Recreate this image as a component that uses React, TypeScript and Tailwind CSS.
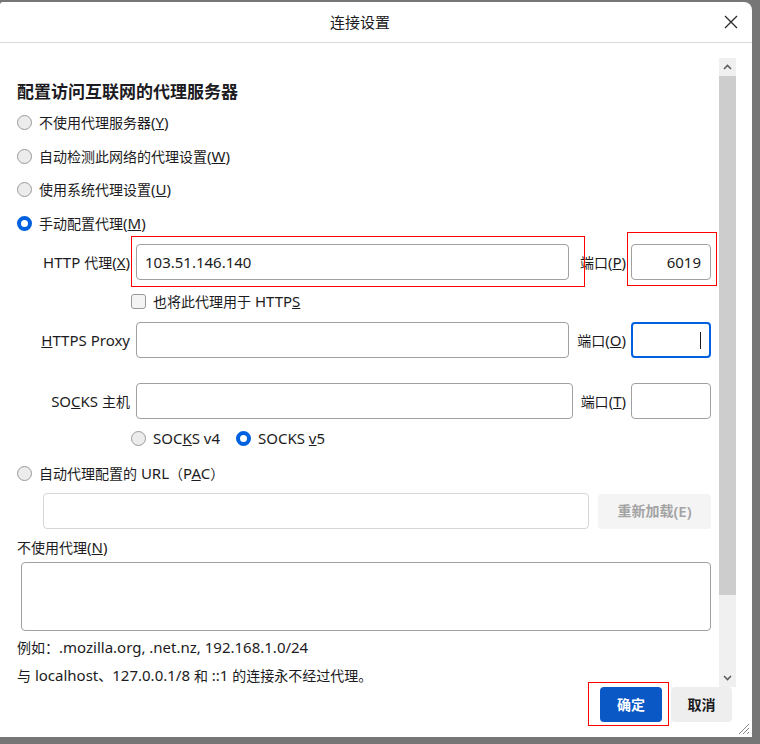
import type { ReactNode } from "react";

// Firefox "连接设置" proxy dialog

// Latin runs are set a touch larger than the CJK text around them
function En({ children }: { children: ReactNode }) {
  return <span className="text-[15px]">{children}</span>;
}

// access-key hint such as "(Y)"
function Key({ k }: { k: string }) {
  return (
    <span className="text-[15px]">
      (<u>{k}</u>)
    </span>
  );
}

function Radio({ checked = false }: { checked?: boolean }) {
  return checked ? (
    <span className="w-[15px] h-[15px] rounded-full border-[4px] border-[#0061e0] bg-white shrink-0" />
  ) : (
    <span className="w-[15px] h-[15px] rounded-full border border-[#9a9a9a] bg-[#ececec] shrink-0" />
  );
}

function RadioRow({
  checked,
  children,
  className = "",
}: {
  checked?: boolean;
  children: ReactNode;
  className?: string;
}) {
  return (
    <div className={"flex items-center h-[24px] gap-[7px] " + className}>
      <Radio checked={checked} />
      <span>{children}</span>
    </div>
  );
}

function Field({
  className = "",
  children,
}: {
  className?: string;
  children?: ReactNode;
}) {
  return (
    <div
      className={
        "relative h-[36px] rounded-[4px] border border-[#a0a0a0] bg-white flex items-center " +
        className
      }
    >
      {children}
    </div>
  );
}

function Chevron({ up }: { up?: boolean }) {
  return (
    <svg width="9" height="6" viewBox="0 0 9 6">
      <path
        d={up ? "M1 5 L4.5 1.5 L8 5" : "M1 1 L4.5 4.5 L8 1"}
        fill="none"
        stroke="#5f5f5f"
        strokeWidth="1.6"
      />
    </svg>
  );
}

export default function App() {
  return (
    <div className="w-[760px] h-[744px] bg-[#767676] pt-[2px] overflow-hidden font-['Noto_Sans','Noto_Sans_CJK_SC',sans-serif] text-[14px] text-[#1c1b22]">
      <div className="relative w-[752px] h-[735px] bg-white rounded-tr-[8px] rounded-tl-[3px] flex flex-col">
        {/* title bar */}
        <div className="h-[41px] flex items-center border-b border-[#d9d9d9] shrink-0">
          <div className="flex-1 text-center text-[15px] leading-[20px]">
            连接设置
          </div>
          <div className="w-[22px] mr-[10px] flex justify-center">
            <svg width="14" height="14" viewBox="0 0 14 14">
              <path
                d="M1 1 L13 13 M13 1 L1 13"
                stroke="#2b2b2b"
                strokeWidth="1.3"
              />
            </svg>
          </div>
        </div>

        {/* scrolling body */}
        <div className="h-[644px] flex shrink-0 overflow-hidden">
          <div className="flex-1 pl-[17px] pt-[37px] flex flex-col leading-[24px]">
            <div className="h-[24px] text-[17px] font-bold">
              配置访问互联网的代理服务器
            </div>
            <RadioRow className="mt-[6px]">
              不使用代理服务器<Key k="Y" />
            </RadioRow>
            <RadioRow className="mt-[10px]">
              自动检测此网络的代理设置<Key k="W" />
            </RadioRow>
            <RadioRow className="mt-[9px]">
              使用系统代理设置<Key k="U" />
            </RadioRow>
            <RadioRow checked className="mt-[10px]">
              手动配置代理<Key k="M" />
            </RadioRow>

            {/* HTTP */}
            <div className="mt-[9px] flex items-center">
              <div className="w-[114px] text-right pr-[1px] whitespace-nowrap">
                <En>HTTP </En>代理<Key k="X" />
              </div>
              <Field className="ml-[5px] w-[433px] pl-[8px] text-[15px]">
                103.51.146.140
                <div className="absolute left-[-6px] top-[-9px] right-[-17px] bottom-[-8px] border border-[#ff0000] pointer-events-none" />
              </Field>
              <div className="w-[57px] text-right whitespace-nowrap">
                端口<Key k="P" />
              </div>
              <Field className="ml-[5px] w-[80px] justify-end pr-[9px] text-[15px]">
                6019
                <div className="absolute left-[-5px] top-[-13px] right-[-7px] bottom-[-7px] border border-[#ff0000] pointer-events-none" />
              </Field>
            </div>

            <div className="mt-[9px] h-[24px] flex items-center ml-[114px] gap-[7px]">
              <span className="w-[15px] h-[15px] rounded-[3px] border border-[#9a9a9a] bg-[#f4f4f4]" />
              <span>
                也将此代理用于
                <En>
                  {" "}
                  HTTP<u>S</u>
                </En>
              </span>
            </div>

            {/* HTTPS */}
            <div className="mt-[9px] flex items-center">
              <div className="w-[114px] text-right pr-[1px] whitespace-nowrap">
                <En>
                  <u>H</u>TTPS Proxy
                </En>
              </div>
              <Field className="ml-[5px] w-[433px]" />
              <div className="w-[57px] text-right whitespace-nowrap">
                端口<Key k="O" />
              </div>
              <div className="ml-[5px] w-[80px] h-[36px] rounded-[4px] border-2 border-[#0061e0] flex items-center justify-end pr-[8px]">
                <span className="w-[1px] h-[17px] bg-[#1c1b22]" />
              </div>
            </div>

            {/* SOCKS */}
            <div className="mt-[25px] flex items-center">
              <div className="w-[114px] text-right pr-[1px] whitespace-nowrap">
                <En>
                  SO<u>C</u>KS{" "}
                </En>
                主机
              </div>
              <Field className="ml-[5px] w-[437px]" />
              <div className="w-[53px] text-right whitespace-nowrap">
                端口<Key k="T" />
              </div>
              <Field className="ml-[5px] w-[80px]" />
            </div>

            <div className="mt-[7px] h-[24px] flex items-center ml-[114px]">
              <div className="w-[105px] flex items-center gap-[7px]">
                <Radio />
                <En>
                  SOC<u>K</u>S v4
                </En>
              </div>
              <div className="flex items-center gap-[7px]">
                <Radio checked />
                <En>
                  SOCKS <u>v</u>5
                </En>
              </div>
            </div>

            <RadioRow className="mt-[11px]">
              自动代理配置的<En> URL</En>（<En>P<u>A</u>C</En>）
            </RadioRow>

            <div className="mt-[8px] flex items-center">
              <div className="ml-[26px] w-[546px] h-[36px] rounded-[4px] border border-[#d6d6d6]" />
              <div className="ml-[9px] w-[113px] h-[35px] rounded-[4px] bg-[#f4f4f4] flex items-center justify-center font-semibold text-[#a3a3a3]">
                重新加载<En>(E)</En>
              </div>
            </div>

            <div className="mt-[6px] h-[24px]">
              不使用代理<Key k="N" />
            </div>
            <div className="mt-[3px] ml-[4px] w-[690px] h-[72px] rounded-[4px] border border-[#a0a0a0]" />
            <div className="mt-[4px] h-[24px] whitespace-nowrap">
              例如：<En>.mozilla.org, .net.nz, 192.168.1.0/24</En>
            </div>
            <div className="mt-[4px] h-[24px] whitespace-nowrap">
              与<En> localhost</En>、<En>127.0.0.1/8 </En>和<En> ::1 </En>
              的连接永不经过代理。
            </div>
          </div>

          {/* scrollbar */}
          <div className="w-[17px] mr-[16px] mt-[15px] flex flex-col">
            <div className="h-[18px] bg-[#f0f0f0] flex items-center justify-center">
              <Chevron up />
            </div>
            <div className="h-[519px] bg-[#cdcdcd]" />
            <div className="flex-1 bg-[#f0f0f0] flex items-end justify-center pb-[6px]">
              <Chevron />
            </div>
          </div>
        </div>

        {/* footer buttons */}
        <div className="flex-1 flex justify-end items-start pr-[20px] gap-[9px]">
          <div className="relative">
            <div className="w-[62px] h-[35px] rounded-[4px] bg-[#0a57c6] text-white font-bold flex items-center justify-center">
              确定
            </div>
            <div className="absolute left-[-12px] top-[-5px] right-[-7px] bottom-[-4px] border border-[#ff0000] pointer-events-none" />
          </div>
          <div className="w-[61px] h-[35px] rounded-[4px] bg-[#eeeeee] font-bold flex items-center justify-center">
            取消
          </div>
        </div>

        {/* resize grip */}
        <svg
          className="absolute right-[2px] bottom-[2px]"
          width="13"
          height="13"
          viewBox="0 0 13 13"
        >
          <path
            d="M12 2 L2 12 M12 6 L6 12 M12 10 L10 12"
            stroke="#8a8a8a"
            strokeWidth="1"
          />
        </svg>
      </div>
    </div>
  );
}
